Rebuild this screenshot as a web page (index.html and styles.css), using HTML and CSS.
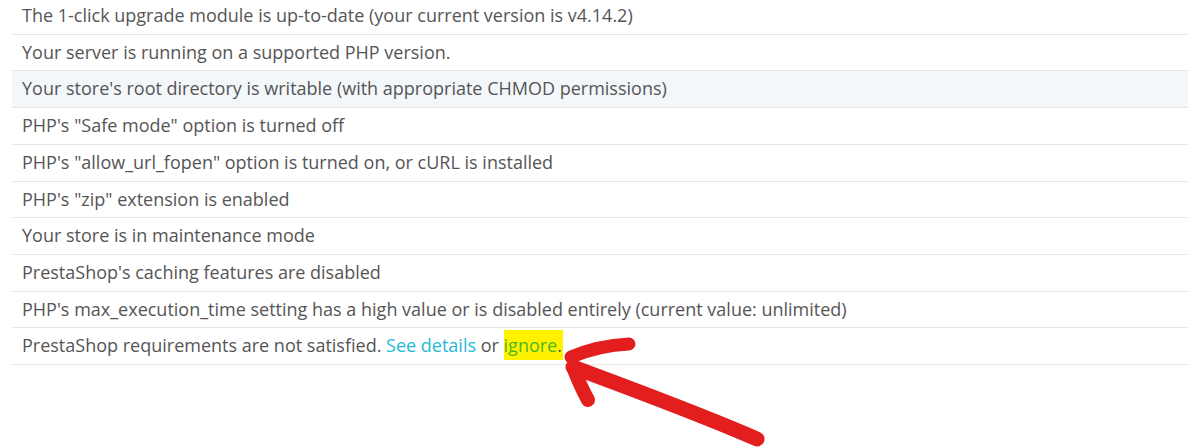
FILE: index.html
```html
<!DOCTYPE html>
<html lang="en">
<head>
    <meta charset="UTF-8">
    <meta name="viewport" content="width=device-width, initial-scale=1.0">
    <link rel="stylesheet" href="styles.css">
</head>
<body>
    <div class="panel">
        <table class="checklist">
            <tbody>
                <tr><td>The 1-click upgrade module is up-to-date (your current version is v4.14.2)</td></tr>
                <tr><td>Your server is running on a supported PHP version.</td></tr>
                <tr class="hover"><td>Your store's root directory is writable (with appropriate CHMOD permissions)</td></tr>
                <tr><td>PHP's "Safe mode" option is turned off</td></tr>
                <tr><td>PHP's "allow_url_fopen" option is turned on, or cURL is installed</td></tr>
                <tr><td>PHP's "zip" extension is enabled</td></tr>
                <tr><td>Your store is in maintenance mode</td></tr>
                <tr><td>PrestaShop's caching features are disabled</td></tr>
                <tr><td>PHP's max_execution_time setting has a high value or is disabled entirely (current value: unlimited)</td></tr>
                <tr>
                    <td>PrestaShop requirements are not satisfied. <a href="#" class="link">See details</a> or <span class="marker"><a href="#" class="link ignore">ignore</a>.</span></td>
                </tr>
            </tbody>
        </table>

        <!-- hand-drawn annotation arrow -->
        <svg class="arrow" width="1188" height="448" viewBox="0 0 1188 448">
            <g fill="none" stroke="#e31e1e" stroke-linecap="round" stroke-linejoin="round">
                <path stroke-width="15" d="M757 439 C700 414 640 392 573 367" />
                <path stroke-width="13" d="M571 357 C590 349 608 345 629 344" />
                <path stroke-width="14" d="M573 367 C578 380 583 391 588 400" />
            </g>
        </svg>
    </div>
</body>
</html>
```

FILE: styles.css
```css
:root {
    --text: #555;
    --border: #e6e6e6;
    --hover: #f3f7fa;
    --link: #25b9d7;
}

* {
    margin: 0;
    padding: 0;
    box-sizing: border-box;
}

html,
body {
    height: 100%;
}

body {
    font-family: "Open Sans", "Noto Sans", sans-serif;
    background: #fff;
    color: var(--text);
}

.panel {
    position: relative;
    height: 448px;
    padding: 0 0 0 12px;
    margin-top: -2px;
}

.checklist {
    width: 100%;
    border-collapse: collapse;
}

.checklist td {
    font-size: 18px;
    line-height: 19.7px;
    padding: 8px 10px;
    border-bottom: 1px solid var(--border);
}

.checklist tr.hover td {
    background: var(--hover);
    border-top: 1px solid var(--border);
}

.link {
    color: var(--link);
    text-decoration: none;
}

.marker {
    background: #fff200;
    padding: 3px 1px 3px 0;
}

.ignore {
    color: #4cb81c;
}

.arrow {
    position: absolute;
    top: 2px;
    left: 0;
    pointer-events: none;
}
```
